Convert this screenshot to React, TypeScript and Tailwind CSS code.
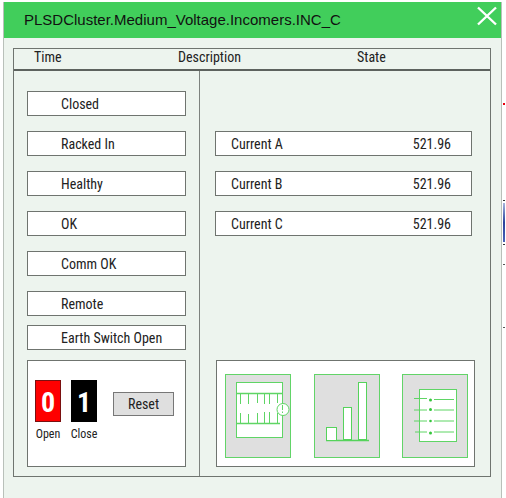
const statuses = ['Closed', 'Racked In', 'Healthy', 'OK', 'Comm OK', 'Remote'];

const currents = [
  { id: 'current-a', label: 'Current A', value: '521.96' },
  { id: 'current-b', label: 'Current B', value: '521.96' },
  { id: 'current-c', label: 'Current C', value: '521.96' },
];

export default function App() {
  return (
    <div className="flex min-h-screen bg-white pt-0.5 pl-[3px] text-[#222]">
      <section className="flex flex-1 flex-col border-x border-[#b9c0ba] bg-[#edf4ee] font-['Roboto_Condensed','Liberation_Sans',Arial,sans-serif] text-sm leading-4">
        <Header title="PLSDCluster.Medium_Voltage.Incomers.INC_C" />

        <main className="mt-[10px] mr-[10px] mb-[21px] ml-[9px] flex flex-1 flex-col border border-[#6f746f]">
          <div className="flex h-[22px] border-b-2 border-[#5d625e] pl-5">
            <span className="w-36">Time</span>
            <span className="w-[179px]">Description</span>
            <span>State</span>
          </div>

          <div className="flex flex-1">
            <div className="flex w-[186px] flex-col border-r border-[#7d827e] px-[13px] pt-5 pb-[9px]">
              <div className="flex flex-col gap-[15px]">
                {statuses.map((status) => (
                  <StatusBox key={status} label={status} />
                ))}
              </div>
              <div className="mt-[9px] mb-[10px]">
                <StatusBox label="Earth Switch Open" />
              </div>
              <BreakerControls />
            </div>

            <div className="flex flex-1 flex-col justify-between pr-[15px] pl-[15px] pt-[60px] pb-[9px]">
              <div className="mr-[3px] flex flex-col gap-[15px]">
                {currents.map((current) => (
                  <CurrentBox key={current.id} {...current} />
                ))}
              </div>
              <div className="ml-px flex h-[107px] items-center justify-between border border-[#6f746f] bg-white pt-1 pr-1.5 pl-2">
                <TileButton label="Events">
                  <EventsIcon />
                </TileButton>
                <TileButton label="Trends">
                  <TrendIcon />
                </TileButton>
                <TileButton label="List">
                  <ListIcon />
                </TileButton>
              </div>
            </div>
          </div>
        </main>
      </section>
      <BackgroundEdge />
    </div>
  );
}

function Header({ title }: { title: string }) {
  return (
    <header className="flex h-9 items-center justify-between bg-[#41ce5b] pr-1 pl-5">
      <h1 className="font-['Liberation_Sans',Arial,sans-serif] text-[15px] text-[#111]">{title}</h1>
      <button type="button" aria-label="Close" className="mt-1 self-start text-white">
        <svg viewBox="0 0 20 20" className="block size-5" stroke="currentColor" strokeWidth="2.4">
          <path d="M1 1.5L19 18.5M19 1.5L1 18.5" />
        </svg>
      </button>
    </header>
  );
}

function StatusBox({ label }: { label: string }) {
  return (
    <div className="flex h-[25px] items-center border border-[#6f746f] bg-white pl-[33px]">{label}</div>
  );
}

function CurrentBox({ id, label, value }: { id: string; label: string; value: string }) {
  return (
    <div className="flex h-[25px] items-center justify-between border border-[#6f746f] bg-white pr-5 pl-[15px]">
      <label htmlFor={id}>{label}</label>
      <output id={id}>{value}</output>
    </div>
  );
}

function BreakerControls() {
  return (
    <div className="flex h-[107px] border border-[#6f746f] bg-white pt-[19px] pl-[7px]">
      <div className="mr-[10px] flex w-[26px] flex-col items-center">
        <button id="open" type="button" className="h-[42px] w-full border border-[#7a1010] bg-[#fe0000] pt-1 text-[28px] leading-8 font-bold text-white">
          0
        </button>
        <label htmlFor="open" className="mt-1 text-xs">Open</label>
      </div>
      <div className="mr-4 flex w-[26px] flex-col items-center">
        <button id="close" type="button" className="h-[42px] w-full border border-black bg-black pt-1 text-[28px] leading-8 font-bold text-white">
          1
        </button>
        <label htmlFor="close" className="mt-1 text-xs">Close</label>
      </div>
      <button type="button" className="mt-3 h-6 w-[61px] border border-[#777] bg-[#dfdfdf]">
        Reset
      </button>
    </div>
  );
}

function TileButton({ label, children }: { label: string; children: React.ReactNode }) {
  return (
    <button type="button" aria-label={label} className="h-[84px] w-[66px] border border-[#62d468] bg-[#dfdfdf]">
      {children}
    </button>
  );
}

function EventsIcon() {
  return (
    <svg viewBox="0 0 64 82" className="block h-full w-full" fill="none" stroke="#5fd565">
      <rect x="10.5" y="7.5" width="46" height="55" fill="#fff" />
      <path d="M10 18.5H57M10 48.5H54" strokeWidth="1.5" />
      <path d="M14.5 19V29M22.5 19V29M31.5 19V28M38.5 19V29M43.5 19V29M51.5 19V28M14.5 38V49M22.5 39V48M31.5 38V48M38.5 37V48M43.5 37V48M51.5 38V48" />
      <circle cx="57" cy="34.5" r="6" fill="#fff" />
      <path d="M56.5 30V35M56.5 36.5V38" />
    </svg>
  );
}

function TrendIcon() {
  return (
    <svg viewBox="0 0 64 82" className="block h-full w-full" fill="none" stroke="#55d35b">
      <path d="M11 65.5H54" strokeWidth="1.5" />
      <rect x="11.5" y="52.5" width="10" height="13" fill="#fff" />
      <rect x="28.5" y="32.5" width="8" height="32" fill="#fff" />
      <rect x="43.5" y="7.5" width="8" height="57" fill="#fff" />
    </svg>
  );
}

function ListIcon() {
  return (
    <svg viewBox="0 0 64 82" className="block h-full w-full" fill="none" stroke="#5fd565">
      <rect x="16.5" y="14.5" width="37" height="52" fill="#fff" />
      <path d="M11 23.5H24M11 35H24M11 46H24M12 57H24M31 24.5H51M31 35H51M31 46H51M31 57H51" />
      <g fill="#35c53c" stroke="none">
        <circle cx="27.5" cy="25" r="1.5" />
        <circle cx="27.5" cy="34.5" r="1.5" />
        <circle cx="27.5" cy="46" r="1.3" />
        <circle cx="27.5" cy="58" r="1.5" />
      </g>
    </svg>
  );
}

// Sliver of the mimic page visible next to the popup
function BackgroundEdge() {
  return (
    <div className="w-1 px-px pt-[101px]">
      <div className="h-0.5 bg-red-600" />
      <div className="mt-[95px] flex h-[45px] flex-col border-y border-[#333] py-0.5">
        <div className="flex-1 bg-linear-to-b from-[#a9b4dc] via-[#2b429c] to-[#4a62b8]" />
      </div>
      <div className="mt-[19px] h-px bg-[#555]" />
      <div className="mt-[62px] h-px bg-[#555]" />
    </div>
  );
}
